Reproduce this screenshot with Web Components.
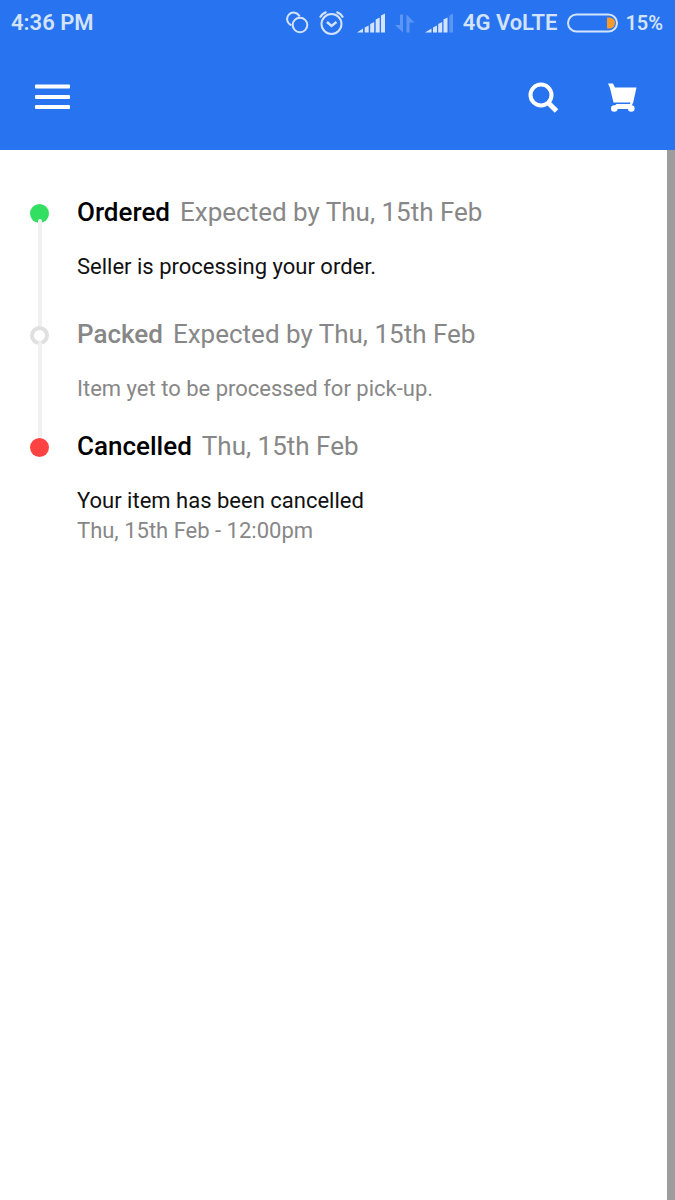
<!DOCTYPE html>
<html lang="en">
<head>
<meta charset="utf-8">
<meta name="viewport" content="width=device-width, initial-scale=1">
<title>Order status</title>
<style>
  html, body { margin: 0; min-height: 100%; }
  body { font-family: Roboto, "Liberation Sans", sans-serif; background: #fff; }
</style>
</head>
<body>
<order-page>
  <status-bar slot="head" time="4:36 PM" network="4G VoLTE" battery="15%"></status-bar>
  <app-bar slot="head"></app-bar>
  <track-step state="done" gap="wide">
    <span slot="name">Ordered</span>
    <span slot="date">Expected by Thu, 15th Feb</span>
    <span slot="text">Seller is processing your order.</span>
  </track-step>
  <track-step state="pending">
    <span slot="name">Packed</span>
    <span slot="date">Expected by Thu, 15th Feb</span>
    <span slot="text">Item yet to be processed for pick-up.</span>
  </track-step>
  <track-step state="cancelled">
    <span slot="name">Cancelled</span>
    <span slot="date">Thu, 15th Feb</span>
    <span slot="text">Your item has been cancelled</span>
    <span slot="time">Thu, 15th Feb - 12:00pm</span>
  </track-step>
</order-page>

<template id="page">
  <style>
    :host { display: flex; flex-direction: column; min-height: 100vh; }
    header { background: #2874f0; }
    main { flex: 1; box-sizing: border-box; padding: 46px 24px 46px 30px; border-right: 8px solid #9d9d9d; }
  </style>
  <header><slot name="head"></slot></header>
  <main><slot></slot></main>
</template>

<template id="status">
  <style>
    :host { display: flex; align-items: center; justify-content: space-between; height: 46px; padding: 0 12px 0 11px;
      color: #d3e3fc; font-size: 22px; line-height: 26px; font-weight: 600; white-space: nowrap; }
    .icons { display: flex; align-items: center; gap: 10px; }
    .power { display: flex; align-items: center; gap: 7px; font-size: 20px; }
    svg { display: block; flex: none; }
  </style>
  <span id="time"></span>
  <div class="icons">
    <svg width="23" height="24" viewBox="0 0 23 24" fill="none" stroke="currentColor" stroke-width="2"><circle cx="14" cy="14" r="7.300"/><path d="M5.500 14.200A6.500 6.500 0 1 1 13.600 5.500"/></svg>
    <svg width="25" height="26" viewBox="0 0 25 26" fill="none" stroke="currentColor" stroke-width="2"><circle cx="12.500" cy="14" r="10"/><path d="M8 12l4.500 4 5-4" stroke-width="2.400"/><path d="M1 7.500Q3 3.500 7.500 2M17.500 2Q22 3.500 24 7.500"/></svg>
    <svg width="31" height="22" viewBox="0 0 31 22" fill="currentColor"><path d="M3 20.500l6-4v4zM10.700 15.500l4-2v7h-4zM16.200 12l4-2v10.500h-4zM21.700 7.500l4-2v15h-4zM27 3.500l4-2v19h-4z"/></svg>
    <svg width="20" height="22" viewBox="0 0 20 22" fill="currentColor" opacity=".3"><path d="M8 2.500V20.500L0 13h5V2.500zM11.500 20.500V2.500l8 8h-5v10z"/></svg>
    <svg width="28" height="22" viewBox="0 0 28 22" fill="currentColor"><path d="M0 20.500l6.500-4v4zM8 15.500l4-2v7H8zM13.200 12l4-2v10.500h-4zM18.500 7.500l4-2v15h-4z"/><path d="M24.300 3.500l3.700-2v19h-3.700z" opacity=".3"/></svg>
    <span id="network"></span>
    <div class="power">
      <svg width="51" height="20" viewBox="0 0 51 20"><rect x="1" y="1.500" width="49" height="17" rx="8.500" fill="none" stroke="currentColor" stroke-width="2"/><path d="M40 4.500h2.500a5.500 5.500 0 0 1 0 11H40z" fill="#f99a2c"/></svg>
      <span id="battery"></span>
    </div>
  </div>
</template>

<template id="bar">
  <style>
    :host { display: flex; align-items: center; justify-content: space-between; height: 104px; padding: 0 28px; }
    nav { display: flex; gap: 32px; }
    button { display: grid; place-items: center; width: 48px; height: 48px; padding: 0; border: 0; background: none; color: #fff; }
    svg { display: block; }
  </style>
  <button aria-label="Menu"><svg width="48" height="48" viewBox="0 0 48 48" fill="currentColor"><rect x="7" y="10.500" width="35" height="4" rx="1"/><rect x="7" y="21" width="35" height="4" rx="1"/><rect x="7" y="31" width="35" height="4" rx="1"/></svg></button>
  <nav>
    <button aria-label="Search"><svg width="48" height="48" viewBox="0 0 48 48" fill="none" stroke="currentColor"><circle cx="22" cy="21" r="10.500" stroke-width="4"/><path d="M29.500 29l8 8" stroke-width="5"/></svg></button>
    <button aria-label="Cart"><svg width="48" height="48" viewBox="0 0 48 48" fill="currentColor"><path d="M9 9.500h5l2 4h21.500l-3.300 15-1.700 3.500v3h-17v-3l2-2h13.500l.5-1.500H14.500L11 14z"/><circle cx="15.300" cy="34.500" r="3.300"/><circle cx="32.300" cy="34.500" r="3.300"/></svg></button>
  </nav>
</template>

<template id="step">
  <style>
    :host { display: grid; grid-template-columns: 19px 1fr; column-gap: 28px; --name: #000; --text: #111; --dot: #32df60; --gap: 26px; }
    :host([gap="wide"]) { --gap: 36px; }
    :host([state="pending"]) { --name: #878787; --text: #878787; --dot: #fff; }
    :host([state="cancelled"]) { --dot: #ff4343; --gap: 0px; }
    .rail { position: relative; padding-top: 8px; }
    .dot { box-sizing: border-box; width: 19px; height: 19px; border-radius: 50%; background: var(--dot); }
    :host([state="pending"]) .dot { border: 4px solid #e0e0e0; }
    .line { position: absolute; left: 8px; width: 4px; top: 23px; bottom: -8px; background: #f0f0f0; border-radius: 2px 2px 0 0; }
    :host([state="cancelled"]) .line { display: none; }
    .body { padding-bottom: var(--gap); }
    h2 { display: flex; flex-wrap: wrap; column-gap: 10px; margin: 0 0 24px; font-size: 26px; line-height: 32px; font-weight: 500; color: var(--name); }
    .date { font-weight: 400; color: #878787; }
    p { margin: 0; font-size: 22px; line-height: 30px; color: var(--text); }
    .time { color: #878787; }
  </style>
  <div class="rail"><div class="dot"></div><div class="line"></div></div>
  <div class="body">
    <h2><slot name="name"></slot><span class="date"><slot name="date"></slot></span></h2>
    <p><slot name="text"></slot></p>
    <p class="time"><slot name="time"></slot></p>
  </div>
</template>

<script>
  class TemplateElement extends HTMLElement {
    constructor() {
      super();
      const template = document.getElementById(this.constructor.template);
      this.attachShadow({ mode: "open" }).append(template.content.cloneNode(true));
    }
  }
  class OrderPage extends TemplateElement { static template = "page"; }
  class AppBar extends TemplateElement { static template = "bar"; }
  class TrackStep extends TemplateElement { static template = "step"; }
  class StatusBar extends TemplateElement {
    static template = "status";
    connectedCallback() {
      for (const name of ["time", "network", "battery"])
        this.shadowRoot.getElementById(name).textContent = this.getAttribute(name);
    }
  }
  customElements.define("order-page", OrderPage);
  customElements.define("status-bar", StatusBar);
  customElements.define("app-bar", AppBar);
  customElements.define("track-step", TrackStep);
</script>
</body>
</html>
